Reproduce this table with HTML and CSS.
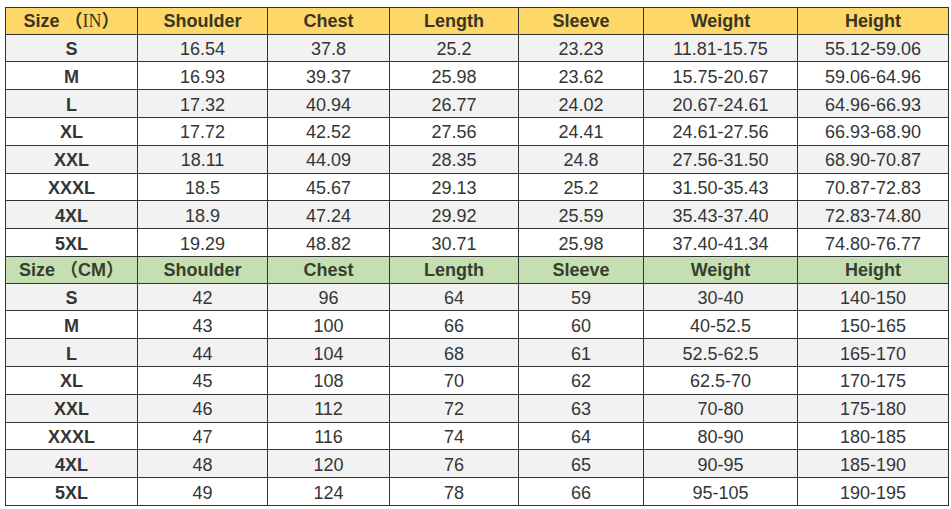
FILE: index.html
```html
<!DOCTYPE html>
<html lang="en">
<head>
<meta charset="utf-8">
<title>Size Chart</title>
<link rel="stylesheet" href="styles.css">
</head>
<body>
<table class="size-chart">
  <colgroup>
    <col class="c-size"><col class="c-shoulder"><col class="c-chest"><col class="c-length"><col class="c-sleeve"><col class="c-weight"><col class="c-height">
  </colgroup>
  <tbody>
    <tr class="head head-in">
      <th>Size <span class="paren">（<span class="unit-serif">IN</span>）</span></th><th>Shoulder</th><th>Chest</th><th>Length</th><th>Sleeve</th><th>Weight</th><th>Height</th>
    </tr>
    <tr class="odd"><td class="sz">S</td><td>16.54</td><td>37.8</td><td>25.2</td><td>23.23</td><td>11.81-15.75</td><td>55.12-59.06</td></tr>
    <tr><td class="sz">M</td><td>16.93</td><td>39.37</td><td>25.98</td><td>23.62</td><td>15.75-20.67</td><td>59.06-64.96</td></tr>
    <tr class="odd"><td class="sz">L</td><td>17.32</td><td>40.94</td><td>26.77</td><td>24.02</td><td>20.67-24.61</td><td>64.96-66.93</td></tr>
    <tr><td class="sz">XL</td><td>17.72</td><td>42.52</td><td>27.56</td><td>24.41</td><td>24.61-27.56</td><td>66.93-68.90</td></tr>
    <tr class="odd"><td class="sz">XXL</td><td>18.11</td><td>44.09</td><td>28.35</td><td>24.8</td><td>27.56-31.50</td><td>68.90-70.87</td></tr>
    <tr><td class="sz">XXXL</td><td>18.5</td><td>45.67</td><td>29.13</td><td>25.2</td><td>31.50-35.43</td><td>70.87-72.83</td></tr>
    <tr class="odd"><td class="sz">4XL</td><td>18.9</td><td>47.24</td><td>29.92</td><td>25.59</td><td>35.43-37.40</td><td>72.83-74.80</td></tr>
    <tr><td class="sz">5XL</td><td>19.29</td><td>48.82</td><td>30.71</td><td>25.98</td><td>37.40-41.34</td><td>74.80-76.77</td></tr>
    <tr class="head head-cm">
      <th>Size <span class="paren">（CM）</span></th><th>Shoulder</th><th>Chest</th><th>Length</th><th>Sleeve</th><th>Weight</th><th>Height</th>
    </tr>
    <tr class="odd"><td class="sz">S</td><td>42</td><td>96</td><td>64</td><td>59</td><td>30-40</td><td>140-150</td></tr>
    <tr><td class="sz">M</td><td>43</td><td>100</td><td>66</td><td>60</td><td>40-52.5</td><td>150-165</td></tr>
    <tr class="odd"><td class="sz">L</td><td>44</td><td>104</td><td>68</td><td>61</td><td>52.5-62.5</td><td>165-170</td></tr>
    <tr><td class="sz">XL</td><td>45</td><td>108</td><td>70</td><td>62</td><td>62.5-70</td><td>170-175</td></tr>
    <tr class="odd"><td class="sz">XXL</td><td>46</td><td>112</td><td>72</td><td>63</td><td>70-80</td><td>175-180</td></tr>
    <tr><td class="sz">XXXL</td><td>47</td><td>116</td><td>74</td><td>64</td><td>80-90</td><td>180-185</td></tr>
    <tr class="odd"><td class="sz">4XL</td><td>48</td><td>120</td><td>76</td><td>65</td><td>90-95</td><td>185-190</td></tr>
    <tr><td class="sz">5XL</td><td>49</td><td>124</td><td>78</td><td>66</td><td>95-105</td><td>190-195</td></tr>
  </tbody>
</table>
</body>
</html>
```

FILE: styles.css
```css
html, body {
  margin: 0;
  padding: 0;
  background: #ffffff;
}

body {
  padding: 7px 0 0 5px;
  font-family: "Liberation Sans", Arial, sans-serif;
}

.size-chart {
  border-collapse: collapse;
  table-layout: fixed;
  width: 943px;
  height: 499px;
  font-size: 18px;
  color: #353535;
}

.c-size { width: 132px; }
.c-shoulder { width: 130px; }
.c-chest { width: 122px; }
.c-length { width: 129px; }
.c-sleeve { width: 125px; }
.c-weight { width: 154px; }
.c-height { width: 151px; }

.size-chart th,
.size-chart td {
  border: 1px solid #333333;
  padding: 0;
  text-align: center;
  vertical-align: middle;
  line-height: 20px;
  white-space: nowrap;
}

.size-chart td {
  padding-top: 2px;
}

.size-chart th {
  font-weight: bold;
  color: #3a3424;
  padding-top: 1px;
}

.head-in th {
  background: #fdd868;
}

.head-cm th {
  background: #c6dfb2;
  color: #34402c;
}

.odd td {
  background: #f2f2f2;
}

.sz {
  font-weight: bold;
}

.paren {
  font-family: "Liberation Sans", "Noto Sans CJK SC", sans-serif;
}

.unit-serif {
  font-family: "Liberation Serif", serif;
  font-weight: normal;
}
```
